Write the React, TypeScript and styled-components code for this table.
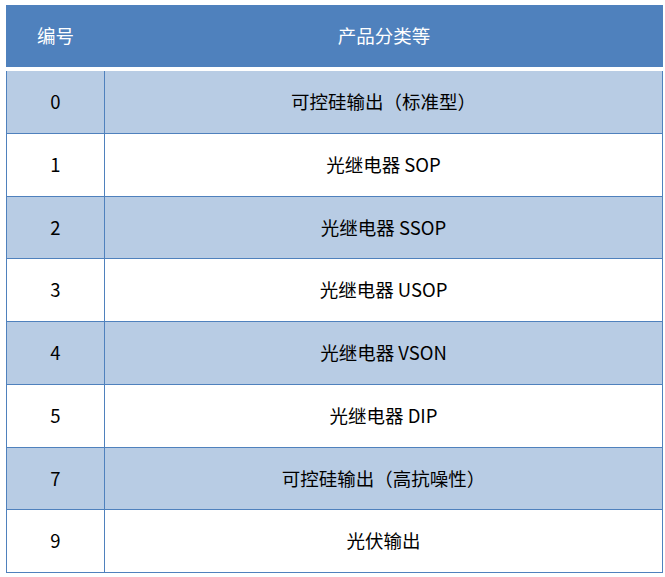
import React from 'react';
import styled, { createGlobalStyle } from 'styled-components';

const GlobalStyle = createGlobalStyle`
  html, body {
    margin: 0;
    padding: 0;
    background: #fff;
  }
  body {
    font-family: "Noto Sans CJK SC", "Noto Sans", "Liberation Sans", sans-serif;
  }
`;

const Wrapper = styled.div`
  width: 657px;
  margin: 5px 0 0 6px;
`;

const HeaderRow = styled.div`
  display: grid;
  grid-template-columns: 99px 1fr;
  height: 62px;
  background: #4f81bd;
  color: #fff;
  font-size: 18.5px;
  line-height: 1;
`;

const Body = styled.div`
  margin-top: 4px;
  border-left: 1px solid #4f81bd;
  border-right: 1px solid #4f81bd;
`;

const Row = styled.div<{ $shaded: boolean }>`
  display: grid;
  grid-template-columns: 98px 1fr;
  height: 62.75px;
  box-sizing: border-box;
  border-bottom: 1px solid #4f81bd;
  background: ${(p) => (p.$shaded ? '#b8cce4' : '#fff')};
  color: #000;
  font-size: 18.5px;
  line-height: 1;
`;

const Cell = styled.div<{ $divider?: boolean }>`
  display: flex;
  align-items: center;
  justify-content: center;
  padding-bottom: 1px;
  border-right: ${(p) => (p.$divider ? '1px solid #4f81bd' : 'none')};
`;

const rows = [
  ['0', '可控硅输出（标准型）'],
  ['1', '光继电器 SOP'],
  ['2', '光继电器 SSOP'],
  ['3', '光继电器 USOP'],
  ['4', '光继电器 VSON'],
  ['5', '光继电器 DIP'],
  ['7', '可控硅输出（高抗噪性）'],
  ['9', '光伏输出'],
];

const App: React.FC = () => {
  return (
    <>
      <GlobalStyle />
      <Wrapper>
        <HeaderRow>
          <Cell>编号</Cell>
          <Cell>产品分类等</Cell>
        </HeaderRow>
        <Body>
          {rows.map(([code, name], i) => (
            <Row key={code} $shaded={i % 2 === 0}>
              <Cell $divider>{code}</Cell>
              <Cell>{name}</Cell>
            </Row>
          ))}
        </Body>
      </Wrapper>
    </>
  );
};

export default App;
